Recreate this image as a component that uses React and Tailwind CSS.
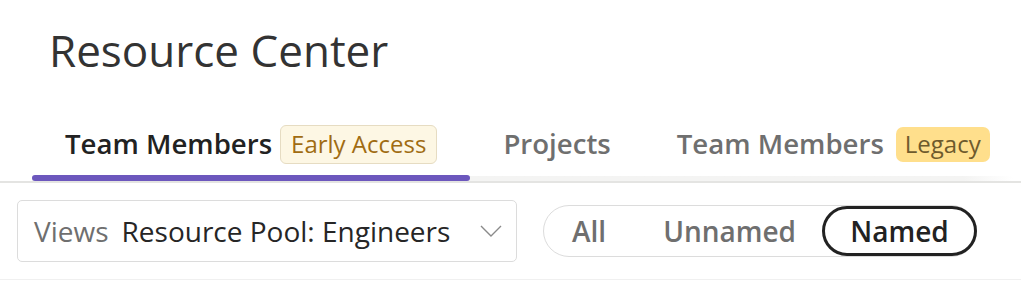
import React from 'react';

// Resource Center header: title, tab bar with badges, view selector + segmented filter.

const FONT = { fontFamily: '"Open Sans", "Noto Sans", sans-serif' };

function Tab({ label, badge, active }) {
  return (
    <div className="relative shrink-0 whitespace-nowrap flex items-center px-[33px] h-[67px] pb-[7px]">
      <span
        className={
          active
            ? 'text-[27.6px] font-semibold text-[#222]'
            : 'text-[27.6px] font-semibold text-[#6f6f6f]'
        }
      >
        {label}
      </span>
      {badge}
      {active && (
        <div className="absolute left-0 right-0 bottom-0 h-[6px] rounded-full bg-[#6c57bd]" />
      )}
    </div>
  );
}

export default function App() {
  return (
    <div className="w-[1021px] h-[288px] bg-white overflow-hidden" style={FONT}>
      <h1 className="pl-[49px] pt-[22px] text-[44px] leading-[56px] text-[#333] font-normal whitespace-nowrap">
        Resource Center
      </h1>

      {/* Tabs */}
      <div className="relative mt-[36px] border-b-2 border-[#e4e4e2] flex pl-[32px]">
        <div className="absolute left-[32px] right-[8px] bottom-0 h-[5px] bg-linear-to-r from-[#f4f4f3] from-95% to-white" />
        <Tab
          active
          label="Team Members"
          badge={
            <span className="ml-[8px] px-[10px] h-[39px] flex items-center rounded-[6px] border border-[#e6dcc2] bg-[#fdf7e4] text-[24px] text-[#a06c12]">
              Early Access
            </span>
          }
        />
        <Tab label="Projects" />
        <Tab
          label="Team Members"
          badge={
            <span className="ml-[12px] px-[9px] h-[35px] flex items-center rounded-[7px] bg-[#ffdf8c] text-[24px] text-[#6e5a2c]">
              Legacy
            </span>
          }
        />
      </div>

      {/* Filters */}
      <div className="flex items-center pl-[17px] pt-[17px] pb-[17px] border-b border-[#f0f0f0] whitespace-nowrap">
        <div className="shrink-0 w-[500px] h-[62px] border border-[#dcdcdc] rounded-[5px] flex items-center pl-[16px] pr-[14px]">
          <span className="text-[28px] text-[#6f6f6f]">Views</span>
          <span className="ml-[13px] text-[28px] text-[#262626]">Resource Pool: Engineers</span>
          <svg className="ml-auto" width="22" height="12" viewBox="0 0 22 12" fill="none">
            <path d="M1 1l10 10L21 1" stroke="#8a8a8a" strokeWidth="1.4" />
          </svg>
        </div>

        <div className="shrink-0 ml-[26px] w-[434px] h-[52px] rounded-full border border-[#dcdcdc] flex items-center">
          <span className="ml-[28px] text-[28px] font-semibold text-[#6f6f6f]">All</span>
          <span className="ml-[57px] text-[28px] font-semibold text-[#6f6f6f]">Unnamed</span>
          <span className="ml-auto mr-[-1px] w-[155px] h-[50px] rounded-full border-[3px] border-[#222] flex items-center justify-center text-[28px] font-semibold text-[#222]">
            Named
          </span>
        </div>
      </div>
    </div>
  );
}
